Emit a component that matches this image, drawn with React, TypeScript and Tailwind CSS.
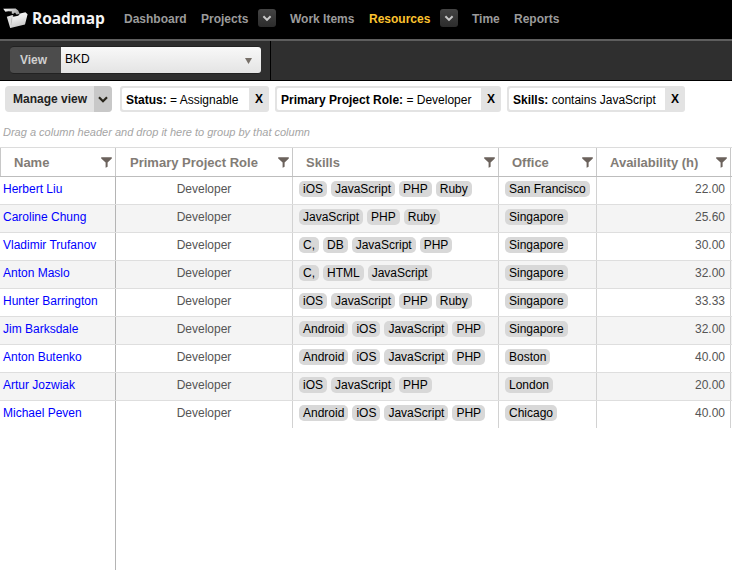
import React from "react";

const rows = [
  { name: "Herbert Liu", role: "Developer", skills: ["iOS", "JavaScript", "PHP", "Ruby"], office: "San Francisco", hours: "22.00" },
  { name: "Caroline Chung", role: "Developer", skills: ["JavaScript", "PHP", "Ruby"], office: "Singapore", hours: "25.60" },
  { name: "Vladimir Trufanov", role: "Developer", skills: ["C,", "DB", "JavaScript", "PHP"], office: "Singapore", hours: "30.00" },
  { name: "Anton Maslo", role: "Developer", skills: ["C,", "HTML", "JavaScript"], office: "Singapore", hours: "32.00" },
  { name: "Hunter Barrington", role: "Developer", skills: ["iOS", "JavaScript", "PHP", "Ruby"], office: "Singapore", hours: "33.33" },
  { name: "Jim Barksdale", role: "Developer", skills: ["Android", "iOS", "JavaScript", "PHP"], office: "Singapore", hours: "32.00" },
  { name: "Anton Butenko", role: "Developer", skills: ["Android", "iOS", "JavaScript", "PHP"], office: "Boston", hours: "40.00" },
  { name: "Artur Jozwiak", role: "Developer", skills: ["iOS", "JavaScript", "PHP"], office: "London", hours: "20.00" },
  { name: "Michael Peven", role: "Developer", skills: ["Android", "iOS", "JavaScript", "PHP"], office: "Chicago", hours: "40.00" },
];

const grid = "grid grid-cols-[116px_177px_206px_98px_134px_1px]";

function Logo() {
  return (
    <svg width="25" height="21" viewBox="0 0 25 21" className="shrink-0">
      <defs>
        <linearGradient id="folder" x1="0" y1="0" x2="0.3" y2="1">
          <stop offset="0" stopColor="#ffffff" />
          <stop offset="0.5" stopColor="#e9e9e9" />
          <stop offset="1" stopColor="#c6c6c6" />
        </linearGradient>
        <linearGradient id="arrow" x1="0" y1="0" x2="1" y2="0.3">
          <stop offset="0" stopColor="#ffffff" />
          <stop offset="1" stopColor="#a8a8a8" />
        </linearGradient>
      </defs>
      <path d="M0.2 0.8L12.6 0.6L15.2 2.6L16.8 6L13.4 6.4L12 4.4L10 6L8.6 5.2L9 3.6L5.4 3.2L2.4 3.8Z" fill="url(#arrow)" />
      <path d="M3.8 8.8L9.4 7L10.6 8L9 9.6L8.2 19.6L7.2 20Z" fill="#dedede" />
      <path d="M9 9L15.2 7.8L17.2 5.5L22.4 4.3L24.6 6.2L22 16.4L7.4 20Z" fill="url(#folder)" />
      <path d="M9.2 9.4L8 17" fill="none" stroke="#b0b0b0" strokeWidth="0.5" />
    </svg>
  );
}

function NavDrop() {
  return (
    <span className="flex h-[18px] w-[18px] items-center justify-center rounded-[3px] bg-linear-to-b from-[#444] to-[#2c2c2c]">
      <svg width="10" height="7" viewBox="0 0 10 7">
        <path d="M1.4 1.3L5 4.9L8.6 1.3" fill="none" stroke="#c8c8c8" strokeWidth="2" />
      </svg>
    </span>
  );
}

function Funnel() {
  return (
    <svg width="11" height="11" viewBox="0 0 11 11" className="shrink-0">
      <path d="M0.2 0.2H10.8V1.4L6.6 5.4V9.8L4.6 10.8V5.4L0.2 1.4Z" fill="#6b625c" />
    </svg>
  );
}

function Head({ label, cls }: { label: string; cls: string }) {
  return (
    <div className={"flex items-center justify-between border-r border-[#c8c8c8] pr-[3px] " + cls}>
      <span className="pt-[2px]">{label}</span>
      <Funnel />
    </div>
  );
}

function Filter({ label, value, cls }: { label: string; value: string; cls: string }) {
  return (
    <div className={"flex h-[26px] rounded-[3px] bg-[#e3e3e3] p-[2px] pr-0 text-black " + cls}>
      <div className="flex-1 rounded-l-[2px] bg-white pl-[4px] leading-[25px] whitespace-nowrap">
        <b>{label}</b> {value}
      </div>
      <b className="w-[20px] text-center leading-[23px]">X</b>
    </div>
  );
}

function Tag({ text }: { text: string }) {
  return <span className="h-[16px] rounded-[5px] bg-[#d8d8d8] px-[4px] leading-[17px] text-black">{text}</span>;
}

export default function App() {
  return (
    <div className="flex h-[570px] w-[732px] flex-col overflow-hidden bg-white font-['Liberation_Sans',Arial,sans-serif] text-[12px] whitespace-nowrap">
      <nav className="flex h-[39px] shrink-0 items-center bg-black pb-[3px] pl-[3px] leading-[18px] font-bold text-[#9b9b9b]">
        <div className="flex w-[121px] items-center gap-[4px]">
          <Logo />
          <span className="font-['Open_Sans',sans-serif] text-[15.5px] leading-[20px] tracking-[-0.1px] text-[#f4f4f4]">Roadmap</span>
        </div>
        <span className="w-[77px] pt-[2px]">Dashboard</span>
        <span className="w-[57px] pt-[2px]">Projects</span>
        <NavDrop />
        <span className="ml-[14px] w-[79px] pt-[2px]">Work Items</span>
        <span className="w-[71px] pt-[2px] text-[#fcc32f]">Resources</span>
        <NavDrop />
        <span className="ml-[14px] w-[42px] pt-[2px]">Time</span>
        <span className="pt-[2px]">Reports</span>
      </nav>
      <div className="flex h-[42px] shrink-0 border-t-2 border-b border-t-[#5e5e5e] border-b-black bg-[#2f2f2f]">
        <div className="flex w-[271px] items-start border-r border-black pt-[5px] pl-[10px]">
          <div className="flex h-[28px] w-[251px] rounded-[4px] border-y border-[#222] bg-[#4c4c4c]">
            <b className="w-[51px] pl-[10px] leading-[26px] text-[#d0d0d0]">View</b>
            <div className="flex flex-1 items-center justify-between rounded-r-[3px] bg-linear-to-b from-[#f8f8f8] to-[#e4e4e4] pr-[9px] pl-[4px] text-black">
              <span className="pb-[2px]">BKD</span>
              <svg width="7" height="6" viewBox="0 0 7 6" className="mt-[2px]">
                <path d="M0 0H7L3.5 6Z" fill="#777069" />
              </svg>
            </div>
          </div>
        </div>
      </div>
      <div className="flex shrink-0 items-start pt-[5px] pl-[5px]">
        <div className="mr-[8px] flex h-[26px] w-[107px] overflow-hidden rounded-[4px] bg-[#e2e2e2]">
          <b className="flex-1 pl-[8px] leading-[26px] text-[#222]">Manage view</b>
          <span className="flex w-[18px] items-center justify-center bg-[#c8c8c8]">
            <svg width="10" height="7" viewBox="0 0 10 7">
              <path d="M1 1.2L5 5.2L9 1.2" fill="none" stroke="#29261c" strokeWidth="2.2" />
            </svg>
          </span>
        </div>
        <Filter label="Status:" value="= Assignable" cls="mr-[6px] w-[149px]" />
        <Filter label="Primary Project Role:" value="= Developer" cls="mr-[6px] w-[226px]" />
        <Filter label="Skills:" value="contains JavaScript" cls="w-[178px]" />
      </div>
      <div className="h-[35px] shrink-0 pt-[12px] pl-[3px] text-[11px] leading-[16px] text-[#a5a5a5] italic">
        Drag a column header and drop it here to group by that column
      </div>
      <div className={grid + " h-[30px] shrink-0 border-y border-t-[#dcdcdc] border-b-[#bdbdbd] text-[13px] font-bold text-[#827c76]"}>
        <Head label="Name" cls="border-l pl-[13px]" />
        <Head label="Primary Project Role" cls="pl-[14px]" />
        <Head label="Skills" cls="pl-[13px]" />
        <Head label="Office" cls="pl-[13px]" />
        <Head label="Availability (h)" cls="pl-[13px]" />
      </div>
      <div className="flex shrink-0 flex-col">
        {rows.map((r, i) => (
          <div key={r.name} className={grid + (i % 2 ? " bg-[#f4f4f4]" : " bg-white") + (i < 8 ? " h-[28px] border-b border-[#dedede]" : " h-[27px]")}>
            <div className="border-r border-[#b4b4b4] pl-[3px] leading-[25px] text-[#0000ff]">{r.name}</div>
            <div className="border-r border-[#d2d2d2] text-center leading-[25px] text-[#555]">{r.role}</div>
            <div className="flex gap-[4px] border-r border-[#d2d2d2] pt-[4px] pl-[6px]">
              {r.skills.map((s) => (
                <Tag key={s} text={s} />
              ))}
            </div>
            <div className="flex border-r border-[#d2d2d2] pt-[4px] pl-[6px]">
              <Tag text={r.office} />
            </div>
            <div className="border-r border-[#d2d2d2] pr-[5px] text-right leading-[25px] text-[#555]">{r.hours}</div>
          </div>
        ))}
      </div>
      <div className="w-[116px] flex-1 border-r border-[#b4b4b4]" />
    </div>
  );
}
